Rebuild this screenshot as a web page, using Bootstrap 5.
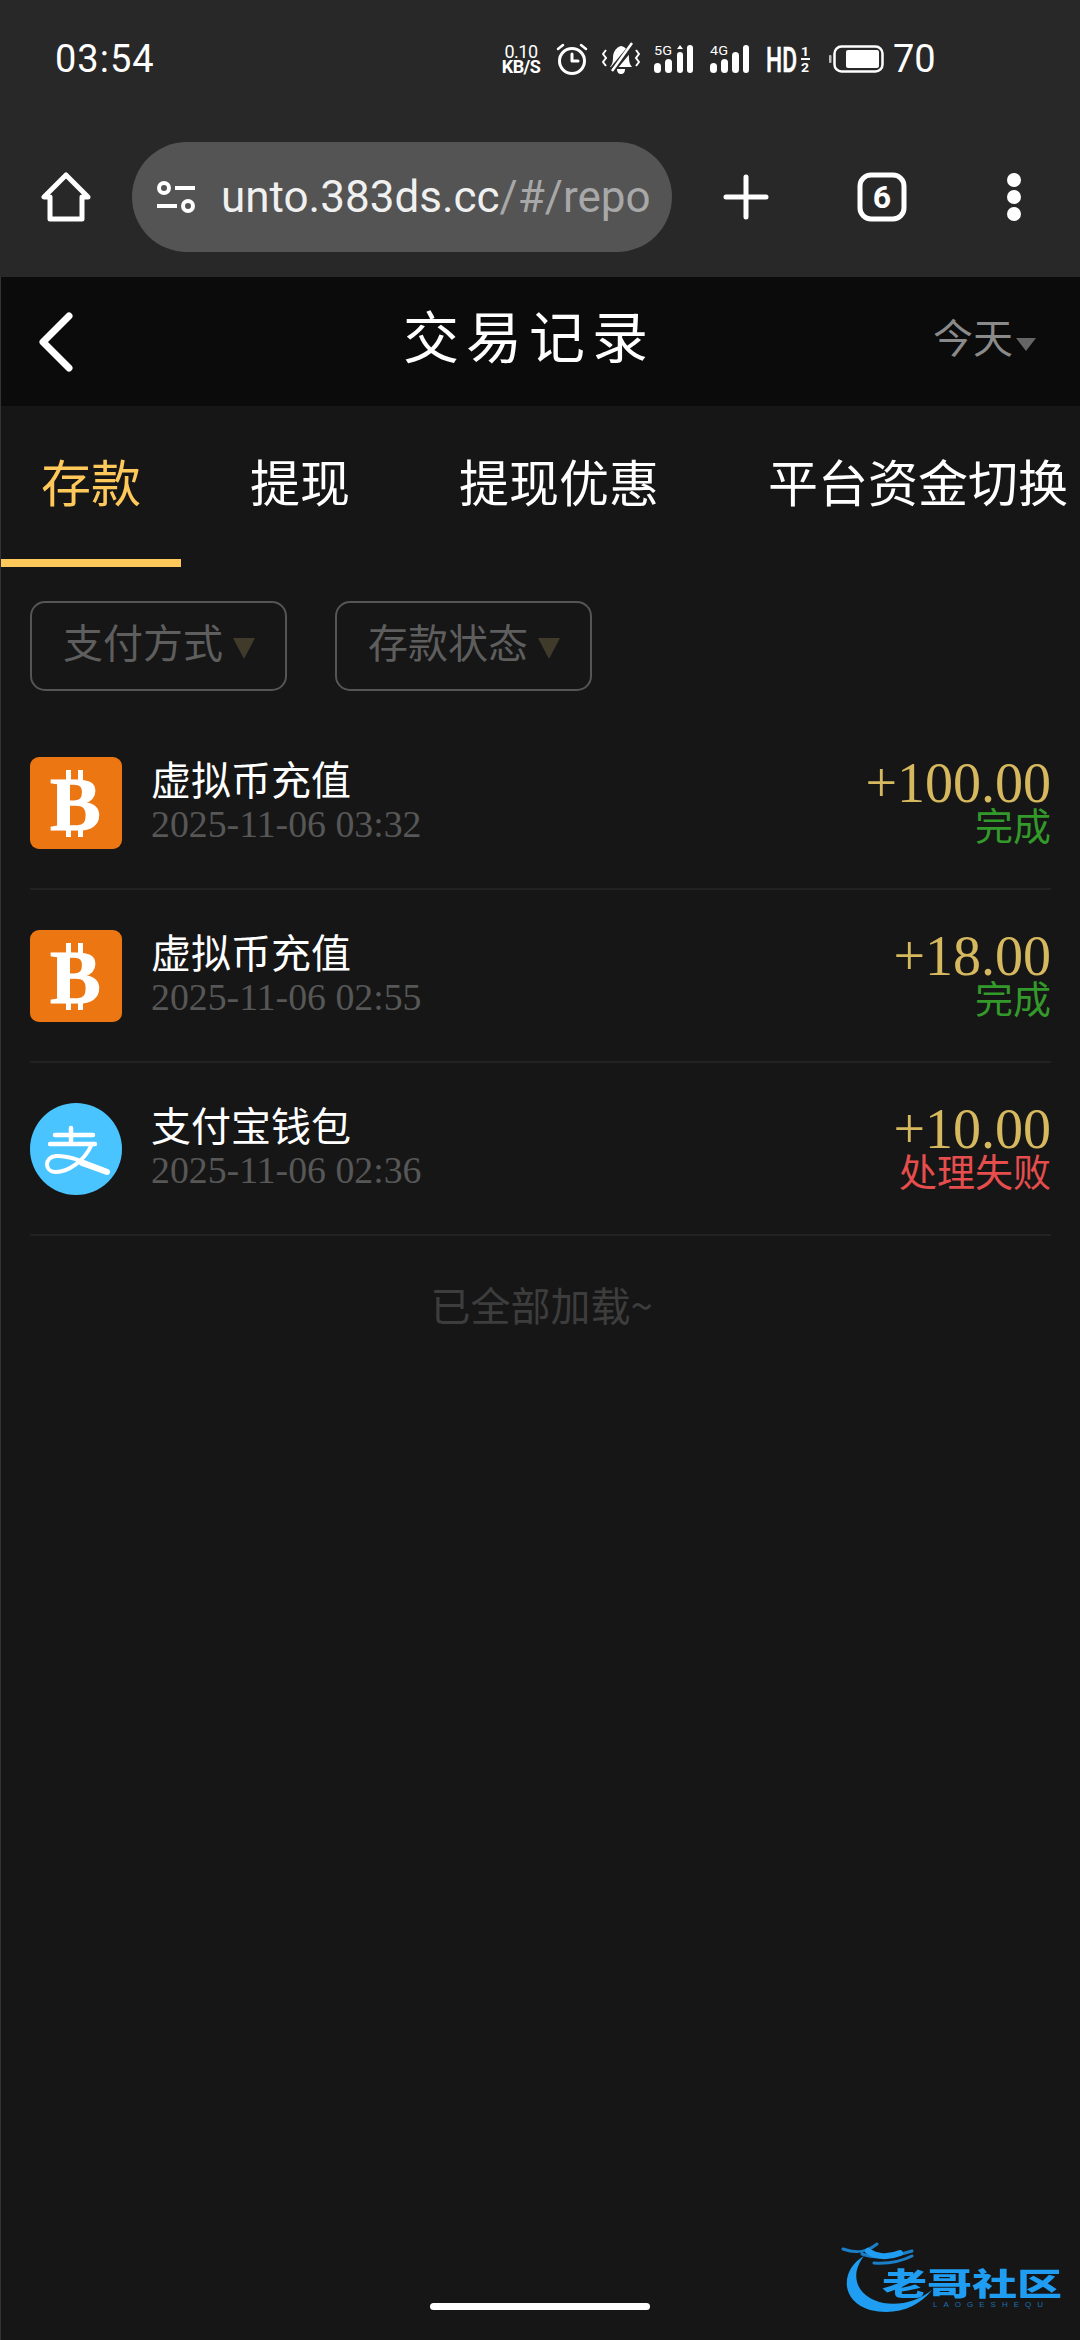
<!DOCTYPE html>
<html lang="zh-CN">
<head>
  <meta charset="UTF-8">
  <meta name="viewport" content="width=device-width, initial-scale=1">
  <title>交易记录</title>
  <link href="https://cdn.jsdelivr.net/npm/bootstrap@5.3.0/dist/css/bootstrap.min.css" rel="stylesheet">
  <style>
    /* Page */
    body {
      width: 1080px;
      height: 2340px;
      background: #161616;
      font-family: "Noto Sans CJK SC", "Liberation Sans", sans-serif;
      color: #fff;
      overflow: hidden;
    }
    .page-shell { height: 2340px; border-left: 1px solid #333; }

    /* Browser chrome */
    .chrome { background: #282828; height: 277px; margin-left: -1px; }
    .status-row { height: 117px; padding: 0 147px 0 55px; font-family: Roboto, sans-serif; }
    .clock { font-size: 38px; letter-spacing: 1px; line-height: 1; }
    .speed { width: 44px; margin-right: 13px; text-align: center; }
    .speed-top { font-size: 18px; line-height: 15px; letter-spacing: -.5px; }
    .speed-bottom { font-size: 18px; line-height: 15px; font-weight: 700; letter-spacing: -.6px; white-space: nowrap; }
    .icon-gap-s { margin-right: 14px; }
    .icon-gap-m { margin-right: 17px; }
    .icon-gap-l { margin-right: 19px; }
    .batt-num { font-size: 38px; line-height: 1; margin-left: 9px; width: 40px; }
    .tool-row { height: 160px; padding-left: 41px; }
    .url-pill {
      width: 540px;
      height: 110px;
      margin-left: 41px;
      margin-right: 51px;
      background: #545454;
      border-radius: 55px;
      padding-left: 24px;
      font-family: Roboto, sans-serif;
      font-size: 44px;
      white-space: nowrap;
      overflow: hidden;
    }
    .url-text { margin-left: 25px; color: #f0f0f0; }
    .url-path { color: #a8a8a8; }
    .tab-count { margin-left: 88px; }
    .more-dots { margin-left: 99px; }

    /* Page header */
    .head-bar { height: 129px; background: #0b0b0b; padding-left: 37px; padding-right: 44px; }
    .head-title { margin-left: 329px; padding-bottom: 16px; font-size: 56px; letter-spacing: 7px; line-height: 1; }
    .head-range { font-size: 40px; color: #8a8a8a; line-height: 1; padding-bottom: 12px; }
    .tri-grey { width: 0; height: 0; border: 10px solid transparent; border-top: 13px solid #666; border-bottom: 0; margin-left: 3px; margin-top: 6px; }

    /* Tabs */
    .tab-strip { height: 161px; gap: 29px; overflow: hidden; }
    .tab-item { padding: 46px 40px 0; font-size: 50px; line-height: 56px; white-space: nowrap; flex-shrink: 0; border-bottom: 8px solid transparent; color: #fff; }
    .tab-item.on { color: #ffc85a; border-bottom-color: #ffc85a; }

    /* Filters */
    .filter-row { padding: 34px 0 0 29px; gap: 48px; }
    .filter-btn {
      width: 257px;
      height: 90px;
      padding: 0 0 0 31px;
      border: 2px solid #555;
      border-radius: 15px;
      background: transparent;
      color: #5e5e5e;
      font-size: 40px;
      line-height: 1;
    }
    .filter-label { padding-bottom: 10px; }
    .tri-dim { width: 0; height: 0; border: 11px solid transparent; border-top: 21px solid #3f3a2a; border-bottom: 0; margin-left: 10px; margin-top: 4px; }

    /* Records */
    .record-list { margin: 26px 29px 0; }
    .record-item { padding: 40px 0 39px; border-bottom: 2px solid #222; gap: 29px; }
    .record-icon { width: 92px; height: 92px; flex-shrink: 0; display: block; }
    .record-name { font-size: 40px; line-height: 42px; padding-bottom: 4px; }
    .record-time { font-family: "Liberation Serif", serif; font-size: 37.8px; line-height: 42px; color: #575757; }
    .record-sum { font-family: "Liberation Serif", serif; font-size: 56px; line-height: 52px; padding-bottom: 2px; color: #d6b95f; text-align: right; }
    .record-state { font-size: 38px; line-height: 26px; padding-bottom: 4px; text-align: right; }
    .state-ok { color: #33992a; }
    .state-bad { color: #e64d4d; }
    .end-note { padding-top: 38px; font-size: 40px; line-height: 60px; color: #3d3d3d; text-align: center; margin-left: 2px; }

    /* Things laid over the page */
    .home-pill { position: absolute; left: 430px; top: 2303px; width: 220px; height: 7px; background: #fff; border-radius: 4px; }
    .wm-logo { position: absolute; left: 840px; top: 2240px; width: 240px; height: 90px; }
    .wm-name {
      position: absolute;
      left: 42px;
      top: 27px;
      font-size: 45px;
      font-weight: 900;
      color: #1f9df2;
      line-height: 30px;
      white-space: nowrap;
      transform: scaleY(.68);
      filter: blur(.6px);
    }
    .wm-sub { position: absolute; left: 93px; top: 60px; font-family: "Liberation Sans", sans-serif; font-size: 8px; letter-spacing: 6px; color: #1b6fb0; line-height: 9px; white-space: nowrap; }
  </style>
</head>
<body class="position-relative">
  <div class="page-shell d-flex flex-column">

    <!-- Browser chrome -->
    <div class="chrome">
      <div class="status-row d-flex align-items-center">
        <span class="clock">03:54</span>
        <div class="ms-auto d-flex align-items-center">
          <div class="speed"><div class="speed-top">0.10</div><div class="speed-bottom">KB/S</div></div>
          <svg width="32" height="32" viewBox="0 0 32 32" class="icon-gap-s" fill="none" stroke="#fff" stroke-width="3" stroke-linecap="round" stroke-linejoin="round">
            <circle cx="16" cy="18" r="12.5"/><path d="M16 11v7h6"/><path d="M2 6l5-4M30 6l-5-4" stroke-width="2.5"/>
          </svg>
          <svg width="38" height="34" viewBox="0 0 38 34" class="icon-gap-s" fill="#fff">
            <path d="M8 25c2-2 3-5 3-9 0-7 4-11 8-12 5 1 8 5 8 12 0 4 1 7 3 9z"/>
            <path d="M15 27h8c0 4-2 5-4 5s-4-1-4-5z"/>
            <path d="M7 32L31 3" stroke="#282828" stroke-width="6"/>
            <path d="M10 29L30 1" stroke="#fff" stroke-width="2.5"/>
            <path d="M4 8L1 12l3 4-3 4 3 4M34 8l3 4-3 4 3 4-3 4" fill="none" stroke="#fff" stroke-width="2"/>
          </svg>
          <svg width="39" height="28" viewBox="0 0 39 28" class="icon-gap-m" fill="#fff">
            <text x="0" y="10" font-family="Roboto, sans-serif" font-size="13" textLength="18" lengthAdjust="spacingAndGlyphs">5G</text>
            <rect x="0" y="18" width="7" height="10" rx="3.5"/><rect x="11" y="14" width="7" height="14" rx="3.5"/><rect x="23" y="7" width="6" height="21" rx="3"/><rect x="33" y="0" width="6" height="28" rx="3"/>
            <path d="M26 0l3 4h-6z"/>
          </svg>
          <svg width="39" height="28" viewBox="0 0 39 28" class="icon-gap-m" fill="#fff">
            <text x="0" y="10" font-family="Roboto, sans-serif" font-size="13" textLength="18" lengthAdjust="spacingAndGlyphs">4G</text>
            <rect x="0" y="18" width="7" height="10" rx="3.5"/><rect x="11" y="14" width="7" height="14" rx="3.5"/><rect x="22" y="7" width="7" height="21" rx="3.5"/><rect x="33" y="0" width="6" height="28" rx="3"/>
          </svg>
          <svg width="44" height="28" viewBox="0 0 44 28" class="icon-gap-l" fill="#fff">
            <text x="0" y="27" font-family="Roboto, sans-serif" font-size="35" font-weight="500" stroke="#fff" stroke-width=".5" textLength="31" lengthAdjust="spacingAndGlyphs">HD</text>
            <text x="35" y="11" font-family="Roboto, sans-serif" font-size="13" font-weight="700" textLength="8" lengthAdjust="spacingAndGlyphs">1</text>
            <rect x="35" y="13" width="9" height="2"/>
            <text x="35" y="27" font-family="Roboto, sans-serif" font-size="13" font-weight="700" textLength="8" lengthAdjust="spacingAndGlyphs">2</text>
          </svg>
          <svg width="55" height="28" viewBox="0 0 55 28" fill="none">
            <rect x="5.5" y="1.5" width="48" height="25" rx="7" stroke="#fff" stroke-width="2.5"/>
            <rect x="17" y="5" width="33" height="18" rx="2" fill="#fff"/>
            <rect x="0" y="10" width="2.5" height="8" rx="1" fill="#bbb"/>
          </svg>
          <span class="batt-num">70</span>
        </div>
      </div>
      <div class="tool-row d-flex align-items-center">
        <svg width="50" height="50" viewBox="0 0 50 50" fill="none" stroke="#fff" stroke-width="5" stroke-linejoin="round" stroke-linecap="round">
          <path d="M25 3L3 25h6v22h32V25h6z"/>
        </svg>
        <div class="url-pill d-flex align-items-center">
          <svg width="40" height="32" viewBox="0 0 40 32" fill="none" stroke="#fff" stroke-width="4">
            <circle cx="8" cy="7" r="5"/><circle cx="32" cy="25" r="5"/><path d="M19 7h20M1 25h20"/>
          </svg>
          <span class="url-text">unto.383ds.cc<span class="url-path">/#/repo</span></span>
        </div>
        <svg width="46" height="46" viewBox="0 0 46 46" class="flex-shrink-0" stroke="#fff" stroke-width="5" stroke-linecap="round">
          <path d="M23 3v40M3 23h40"/>
        </svg>
        <svg width="50" height="50" viewBox="0 0 50 50" class="flex-shrink-0 tab-count">
          <rect x="3" y="3" width="44" height="44" rx="11" fill="none" stroke="#fff" stroke-width="5"/>
          <text x="25" y="36" text-anchor="middle" font-family="Roboto, sans-serif" font-size="32" font-weight="700" fill="#fff">6</text>
        </svg>
        <svg width="16" height="48" viewBox="0 0 16 48" class="flex-shrink-0 more-dots" fill="#fff">
          <circle cx="8" cy="7" r="7"/><circle cx="8" cy="24" r="7"/><circle cx="8" cy="41" r="7"/>
        </svg>
      </div>
    </div>

    <!-- Page header -->
    <div class="head-bar d-flex align-items-center">
      <svg width="36" height="60" viewBox="0 0 36 60" fill="none" stroke="#fff" stroke-width="7" stroke-linecap="round" stroke-linejoin="round">
        <path d="M31 4L5 30l26 26"/>
      </svg>
      <div class="head-title">交易记录</div>
      <div class="ms-auto d-flex align-items-center">
        <span class="head-range">今天</span><span class="tri-grey"></span>
      </div>
    </div>

    <!-- Tabs -->
    <div class="tab-strip d-flex">
      <div class="tab-item on">存款</div>
      <div class="tab-item">提现</div>
      <div class="tab-item">提现优惠</div>
      <div class="tab-item">平台资金切换</div>
    </div>

    <!-- Filters -->
    <div class="filter-row d-flex">
      <button type="button" class="filter-btn d-flex align-items-center"><span class="filter-label">支付方式</span><span class="tri-dim"></span></button>
      <button type="button" class="filter-btn d-flex align-items-center"><span class="filter-label">存款状态</span><span class="tri-dim"></span></button>
    </div>

    <!-- Records -->
    <div class="record-list">
      <div class="record-item d-flex align-items-start">
        <svg class="record-icon" viewBox="0 0 92 92">
          <rect width="92" height="92" rx="9" fill="#ec7712"/>
          <rect x="36" y="13" width="5" height="12" fill="#fff"/><rect x="48" y="13" width="5" height="12" fill="#fff"/>
          <rect x="36" y="70" width="5" height="10" fill="#fff"/><rect x="48" y="70" width="5" height="10" fill="#fff"/>
          <text x="20" y="73" font-family="Liberation Serif, serif" font-weight="700" font-size="76" stroke="#fff" stroke-width="1.2" fill="#fff">B</text>
        </svg>
        <div class="flex-grow-1">
          <div class="record-name">虚拟币充值</div>
          <div class="record-time">2025-11-06 03:32</div>
        </div>
        <div>
          <div class="record-sum">+100.00</div>
          <div class="record-state state-ok">完成</div>
        </div>
      </div>
      <div class="record-item d-flex align-items-start">
        <svg class="record-icon" viewBox="0 0 92 92">
          <rect width="92" height="92" rx="9" fill="#ec7712"/>
          <rect x="36" y="13" width="5" height="12" fill="#fff"/><rect x="48" y="13" width="5" height="12" fill="#fff"/>
          <rect x="36" y="70" width="5" height="10" fill="#fff"/><rect x="48" y="70" width="5" height="10" fill="#fff"/>
          <text x="20" y="73" font-family="Liberation Serif, serif" font-weight="700" font-size="76" stroke="#fff" stroke-width="1.2" fill="#fff">B</text>
        </svg>
        <div class="flex-grow-1">
          <div class="record-name">虚拟币充值</div>
          <div class="record-time">2025-11-06 02:55</div>
        </div>
        <div>
          <div class="record-sum">+18.00</div>
          <div class="record-state state-ok">完成</div>
        </div>
      </div>
      <div class="record-item d-flex align-items-start">
        <svg class="record-icon" viewBox="0 0 92 92">
          <circle cx="46" cy="46" r="46" fill="#4ac4ff"/>
          <g fill="none" stroke="#fff" stroke-linecap="round">
            <path d="M25 32h38M20 41h45M41 25v16" stroke-width="4.5"/>
            <path d="M61 43C54 58 38 69 26 69 14 69 14 54 26 53c14-1 32 8 51 15" stroke-width="4"/>
            <path d="M52 60l25 9" stroke-width="6"/>
          </g>
        </svg>
        <div class="flex-grow-1">
          <div class="record-name">支付宝钱包</div>
          <div class="record-time">2025-11-06 02:36</div>
        </div>
        <div>
          <div class="record-sum">+10.00</div>
          <div class="record-state state-bad">处理失败</div>
        </div>
      </div>
    </div>
    <div class="end-note">已全部加载~</div>
  </div>

  <!-- Watermark and home indicator -->
  <div class="wm-logo">
    <svg width="100" height="90" viewBox="0 0 100 90" class="position-absolute top-0 start-0">
      <path d="M24 16C2 28-2 60 30 70c25 6 48-2 62-20C76 63 52 68 34 60 16 52 10 34 24 16z" fill="#1f9df2"/>
      <g fill="none" stroke="#1b7fc8" stroke-linecap="round">
        <path d="M3 9c14 5 24 3 34-5M22 14c16 6 34 2 50-3M34 23c14 1 28-2 38-7" stroke-width="3"/>
        <path d="M28 11c8 6 20 7 32 2" stroke="#1f9df2" stroke-width="6"/>
      </g>
    </svg>
    <div class="wm-name">老哥社区</div>
    <div class="wm-sub">LAOGESHEQU</div>
  </div>
  <div class="home-pill"></div>

  <script src="https://cdn.jsdelivr.net/npm/bootstrap@5.3.0/dist/js/bootstrap.bundle.min.js"></script>
</body>
</html>
